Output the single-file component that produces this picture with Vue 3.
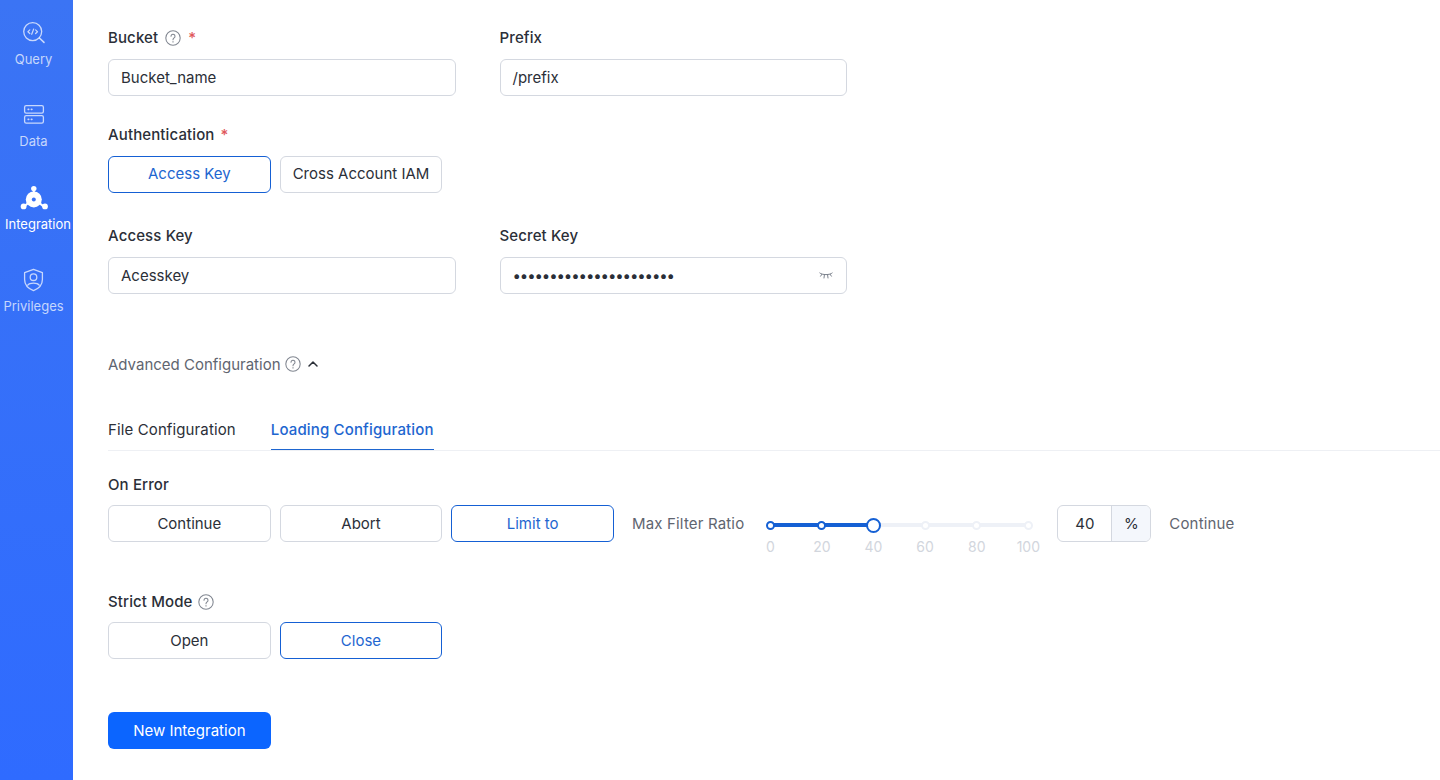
<script setup>
const nav = [
  { key: 'query', label: 'Query' },
  { key: 'data', label: 'Data' },
  { key: 'integration', label: 'Integration', active: true },
  { key: 'privileges', label: 'Privileges' },
]
const ticks = [0, 20, 40, 60, 80, 100]
const secret = '•'.repeat(22)
</script>

<template>
  <div class="page">
    <aside class="side">
      <div v-for="n in nav" :key="n.key" class="nav-item" :class="{ active: n.active }">
        <svg class="nav-icon" viewBox="0 0 24 24" fill="none" stroke="currentColor" stroke-width="1.3" stroke-linecap="round" stroke-linejoin="round">
          <template v-if="n.key === 'query'">
            <circle cx="10.7" cy="10.6" r="9" />
            <path d="M17.4 17 L22 21.4" stroke-width="1.6" />
            <path d="M7.8 8.9 L5.9 10.7 L7.8 12.5 M13.6 8.9 L15.5 10.7 L13.6 12.5 M11.7 8 L9.7 13.3" stroke-width="1.2" />
          </template>
          <template v-else-if="n.key === 'data'">
            <rect x="2.6" y="2.6" width="18.8" height="7.6" rx="1.6" />
            <rect x="2.6" y="12.6" width="18.8" height="7.6" rx="1.6" />
            <path d="M6.2 6.4h.5M9.4 6.4h.5M6.2 16.4h.5M9.4 16.4h.5" stroke-width="1.6" />
          </template>
          <template v-else-if="n.key === 'integration'">
            <circle cx="11.8" cy="13.4" r="8" fill="currentColor" stroke="none" />
            <path d="M11.8 3 V8 M3 19.6 L7 16.5 M20.6 19.6 L16.6 16.5" stroke-width="2" />
            <circle cx="11.8" cy="2.6" r="2.7" fill="currentColor" stroke="none" />
            <circle cx="1.6" cy="20.4" r="2.9" fill="currentColor" stroke="none" />
            <circle cx="23" cy="20.4" r="2.9" fill="currentColor" stroke="none" />
            <circle cx="11.8" cy="13.4" r="2" fill="#3a72f6" stroke="none" />
          </template>
          <template v-else>
            <path d="M11.5 1.4 L20.4 4.6 V11.6 C20.4 17.2 16.2 20.9 11.5 22.6 C6.8 20.9 2.6 17.2 2.6 11.6 V4.6 Z" />
            <circle cx="11.5" cy="9.2" r="3.3" />
            <path d="M5.8 17.2 C7.6 14.4 15.4 14.4 17.2 17.2" />
          </template>
        </svg>
        <span class="nav-label">{{ n.label }}</span>
      </div>
    </aside>

    <main class="main">
      <div class="two">
        <div class="field">
          <div class="label">Bucket
            <svg class="help help-bucket" viewBox="0 0 16 16"><circle cx="8" cy="8" r="7.2" /><path d="M6 6.2a2 2 0 1 1 3.1 1.7c-.7.5-1.1.9-1.1 1.8" /><path d="M8 11.6v.5" /></svg>
            <span class="req">*</span>
          </div>
          <div class="input">Bucket_name</div>
        </div>
        <div class="field">
          <div class="label">Prefix</div>
          <div class="input">/prefix</div>
        </div>
      </div>

      <div class="block-auth">
        <div class="label">Authentication <span class="req">*</span></div>
        <div class="btns">
          <button class="btn on">Access Key</button>
          <button class="btn">Cross Account IAM</button>
        </div>
      </div>

      <div class="two block-keys">
        <div class="field">
          <div class="label">Access Key</div>
          <div class="input">Acesskey</div>
        </div>
        <div class="field">
          <div class="label">Secret Key</div>
          <div class="input secret">
            <span class="dots">{{ secret }}</span>
            <svg class="eye" viewBox="0 0 14 8" fill="none" stroke="#6d7480" stroke-width=".9" stroke-linecap="round"><path d="M.8 1C3 3.2 11 3.2 13.2 1M2.8 2.4 1.6 4.2M5.4 3 5 6M8.6 3 9 6M11.2 2.4l1.2 1.8" /></svg>
          </div>
        </div>
      </div>

      <div class="adv">
        <span>Advanced Configuration</span>
        <svg class="help" viewBox="0 0 16 16"><circle cx="8" cy="8" r="7.2" /><path d="M6 6.2a2 2 0 1 1 3.1 1.7c-.7.5-1.1.9-1.1 1.8" /><path d="M8 11.6v.5" /></svg>
        <svg class="chev" viewBox="0 0 12 8" fill="none" stroke="#2b2f38" stroke-width="1.5" stroke-linecap="round" stroke-linejoin="round"><path d="M2 6 L6 2 L10 6" /></svg>
      </div>

      <div class="tabs">
        <div class="tab">File Configuration</div>
        <div class="tab cur">Loading Configuration</div>
      </div>

      <div class="block-error">
        <div class="label">On Error</div>
        <div class="btns wide">
          <button class="btn">Continue</button>
          <button class="btn">Abort</button>
          <button class="btn on">Limit to</button>
          <span class="ratio-label">Max Filter Ratio</span>
          <div class="slider">
            <div class="track"><div class="fill"></div></div>
            <span v-for="t in ticks" :key="t" class="tick" :class="{ lit: t <= 20, handle: t === 40, dim: t > 40 }" :style="{ left: t + '%' }"></span>
            <span v-for="t in ticks" :key="'l' + t" class="tick-label" :style="{ left: t + '%' }">{{ t }}</span>
          </div>
          <div class="group">
            <span class="g-val">40</span>
            <span class="g-unit">%</span>
          </div>
          <span class="cont">Continue</span>
        </div>
      </div>

      <div class="block-strict">
        <div class="label">Strict Mode
          <svg class="help help-strict" viewBox="0 0 16 16"><circle cx="8" cy="8" r="7.2" /><path d="M6 6.2a2 2 0 1 1 3.1 1.7c-.7.5-1.1.9-1.1 1.8" /><path d="M8 11.6v.5" /></svg>
        </div>
        <div class="btns">
          <button class="btn">Open</button>
          <button class="btn on">Close</button>
        </div>
      </div>

      <button class="primary">New Integration</button>
    </main>
  </div>
</template>

<style>
html, body { margin: 0; background: #fff; overflow: hidden; }
</style>

<style scoped>
.page {
  display: flex;
  width: 1440px;
  height: 780px;
  overflow: hidden;
  font-family: Inter, "Noto Sans", sans-serif;
  font-size: 15px;
  color: #2b2f38;
}
.side {
  width: 73px;
  flex: none;
  background: linear-gradient(180deg, #3b74f4 0%, #2f6bff 100%);
  display: flex;
  flex-direction: column;
  padding-top: 21px;
  box-sizing: border-box;
}
.nav-item {
  width: 67px;
  height: 82.3px;
  display: flex;
  flex-direction: column;
  align-items: center;
  color: rgba(255, 255, 255, 0.72);
}
.nav-item.active { color: #fff; }
.nav-icon { width: 24px; height: 24px; flex: none; overflow: visible; }
.nav-label { font-size: 13px; line-height: 18px; margin-top: 5px; white-space: nowrap; }
.active .nav-label { margin-left: 9px; }
.main { flex: 1; padding: 27px 0 0 35px; min-width: 0; }
.two { display: flex; gap: 44px; }
.field { width: 347.5px; }
.label {
  height: 22px;
  line-height: 22px;
  font-weight: 500;
  letter-spacing: 0.12px;
  display: flex;
  align-items: center;
  gap: 6px;
  margin-bottom: 10px;
  white-space: nowrap;
}
.req { color: #e0575b; }
.help { width: 16px; height: 16px; fill: none; stroke: #808690; stroke-width: 1.05; stroke-linecap: round; flex: none; }
.help-bucket { margin-left: 1px; margin-right: 1px; }
.help-strict { margin-left: 0; }
.input {
  height: 37px;
  box-sizing: border-box;
  border: 1px solid #d4d8e0;
  border-radius: 6px;
  padding: 0 12px;
  display: flex;
  align-items: center;
  background: #fff;
}
.secret { justify-content: space-between; padding-right: 13px; }
.dots { letter-spacing: -1.1px; font-size: 15px; }
.eye { width: 14px; height: 8px; }
.block-auth { margin-top: 28px; }
.block-auth .label { margin-bottom: 9.5px; }
.block-keys { margin-top: 32.5px; }
.btns { display: flex; gap: 9px; align-items: center; }
.btn {
  width: 162.67px;
  height: 37px;
  box-sizing: border-box;
  border: 1px solid #d4d8e0;
  border-radius: 6px;
  background: #fff;
  font: inherit;
  color: #2b2f38;
  padding: 0 0 1px;
  flex: none;
}
.btn.on { border-color: #1560d4; color: #1e66d0; }
.adv {
  margin-top: 59px;
  height: 22px;
  display: flex;
  align-items: center;
  gap: 4px;
  color: #5f6570;
}
.chev { width: 12px; height: 8px; margin-left: 2px; }
.tabs {
  margin-top: 34px;
  display: flex;
  gap: 35px;
  border-bottom: 1px solid #eef0f4;
  height: 41px;
}
.tab { line-height: 42px; height: 41px; box-sizing: border-box; letter-spacing: 0.12px; }
.tab.cur { color: #1e66d0; font-weight: 500; letter-spacing: 0.15px; border-bottom: 1px solid #1e66d0; }
.block-error { margin-top: 23px; }
.block-error .label { margin-bottom: 9px; }
.ratio-label { margin-left: 9px; color: #5f6570; white-space: nowrap; letter-spacing: 0.17px; }
.slider {
  position: relative;
  width: 258px;
  height: 37px;
  margin-left: 17px;
  margin-right: 20px;
  flex: none;
}
.track {
  position: absolute;
  left: 0; right: 0; top: 18px;
  height: 4px;
  margin-top: -0.5px;
  background: #eef1f7;
  border-radius: 2px;
}
.fill { width: 40%; height: 100%; background: #1560d4; border-radius: 2px; }
.tick {
  position: absolute;
  top: 20px;
  width: 9px;
  height: 9px;
  box-sizing: border-box;
  margin: -4.5px 0 0 -4.5px;
  border-radius: 50%;
  background: #fff;
  border: 2px solid #eef1f7;
}
.tick.lit { border-color: #1560d4; }
.tick.handle { width: 15px; height: 15px; margin: -7.5px 0 0 -7.5px; border-color: #1560d4; }
.tick-label {
  position: absolute;
  top: 33px;
  transform: translateX(-50%);
  font-size: 14px;
  line-height: 18px;
  color: #d2d6dd;
}
.group {
  display: flex;
  width: 94px;
  height: 37px;
  box-sizing: border-box;
  border: 1px solid #d4d8e0;
  border-radius: 6px;
  overflow: hidden;
  flex: none;
}
.g-val { width: 53px; display: flex; align-items: center; justify-content: center; border-right: 1px solid #d4d8e0; }
.g-unit { flex: 1; display: flex; align-items: center; justify-content: center; background: #f4f7fc; }
.cont { margin-left: 9px; color: #5f6570; letter-spacing: 0.17px; }
.block-strict { margin-top: 49px; }
.block-strict .label { margin-bottom: 9px; }
.primary {
  display: block;
  margin-top: 53px;
  width: 162.67px;
  height: 37px;
  border: 0;
  border-radius: 6px;
  background: #0b65ff;
  color: #fff;
  font: inherit;
  padding: 0 0 1px;
}
</style>
